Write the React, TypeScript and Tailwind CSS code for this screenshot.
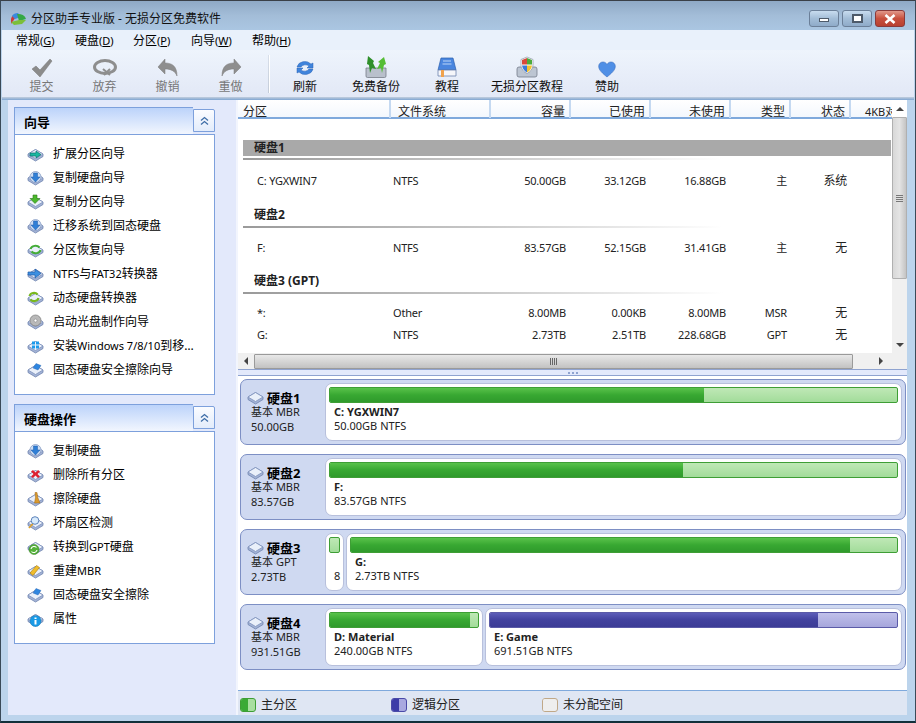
import type { ReactNode } from "react";

const FONT = "font-['Noto_Sans','Noto_Sans_CJK_SC',sans-serif]";

const DiskBase = () => (
  <>
    <path d="M1 8 8.500 3.500 16 8 16 10.500 8.500 15 1 10.500Z" fill="#a3b3d6" stroke="#6f83ad" strokeWidth="0.8" />
    <path d="M1 8 8.500 3.500 16 8 8.500 12.500Z" fill="#eaf0fa" stroke="#7d92bd" strokeWidth="0.8" />
  </>
);

const Overlay = ({ kind }: { kind: string }) => {
  switch (kind) {
    case "extend":
      return <path d="M3 7h6V5l5 3.500-5 3.500v-2H3Z" fill="#18b8a0" stroke="#0d6f70" strokeWidth="0.7" />;
    case "copyDisk":
      return (
        <>
          <circle cx="8.500" cy="7" r="5.500" fill="#cfe0f5" stroke="#7d92bd" strokeWidth="0.7" />
          <path d="M6.500 3h4v4h2.500l-4.500 5-4.500-5h2.500Z" fill="#2f7fd6" stroke="#1f5aa8" strokeWidth="0.5" />
        </>
      );
    case "copyPart":
      return <path d="M6 1h4v3.500h3L8 9.500 3 4.500h3Z" fill="#4cb82e" stroke="#2c7a18" strokeWidth="0.6" />;
    case "recover":
      return (
        <>
          <path d="M3.500 7a5 4 0 0 1 9-1.500" fill="none" stroke="#44ad36" strokeWidth="2" />
          <path d="M13.500 8a5 4 0 0 1-9 1.500" fill="none" stroke="#44ad36" strokeWidth="2" />
        </>
      );
    case "ntfs":
      return <path d="M1 6h7V3l6 4.500-6 4.500V9H1Z" fill="#3c8fe0" stroke="#1f5aa8" strokeWidth="0.7" />;
    case "dynamic":
      return (
        <>
          <path d="M2.500 6a4.500 4 0 0 1 8-1.500" fill="none" stroke="#78b81e" strokeWidth="2.200" />
          <path d="M11.500 8a4.500 4 0 0 1-8 1.500" fill="none" stroke="#78b81e" strokeWidth="2.200" />
        </>
      );
    case "boot":
      return (
        <>
          <circle cx="8.500" cy="6.500" r="5.500" fill="#b9b9b9" stroke="#777" strokeWidth="0.7" />
          <circle cx="8.500" cy="6.500" r="1.500" fill="#fff" stroke="#777" strokeWidth="0.5" />
        </>
      );
    case "windows":
      return <path d="M5 3.500h3v3H5Zm4 0h3v3H9Zm-4 4h3v3H5Zm4 0h3v3H9Z" fill="#1c9bec" />;
    case "wipeSsd":
      return <path d="M9 1.500 14 3.500 11 8 6 6Z" fill="#2f86e0" stroke="#1f5aa8" strokeWidth="0.4" />;
    case "delete":
      return <path d="M6 3 8.500 5.500 11 3 13 4.500 10.500 7 13 9.500 11 11 8.500 8.500 6 11 4 9.500 6.500 7 4 4.500Z" fill="#dd2030" />;
    case "wipe":
      return <path d="M8 1.500h2l.8 5 2.200 5.500H7.500L8.500 6.500Z" fill="#d99a2e" stroke="#9c6514" strokeWidth="0.5" />;
    case "scan":
      return (
        <>
          <path d="M2 13 6 8.500" stroke="#dba02e" strokeWidth="1.800" />
          <circle cx="8" cy="5.500" r="3.800" fill="#d8eafb" stroke="#5c83bb" strokeWidth="1" />
        </>
      );
    case "gpt":
      return (
        <>
          <circle cx="7" cy="10.500" r="5" fill="#55b23a" stroke="#2c7a18" strokeWidth="0.5" />
          <path d="M4 10a3.200 3.200 0 0 1 5.500-1.500M10 11a3.200 3.200 0 0 1-5.500 1.500" fill="none" stroke="#fff" strokeWidth="1.100" />
        </>
      );
    case "mbr":
      return <path d="M3 10 9.500 2.500 12.500 4.500 6 12.500Z" fill="#f0bd2c" stroke="#a8790e" strokeWidth="0.6" />;
    case "info":
      return (
        <>
          <circle cx="8.500" cy="10" r="5.500" fill="#1a9be6" stroke="#0d6fb0" strokeWidth="0.5" />
          <path d="M7.500 9h2v4.500h-2ZM7.500 6.500h2v1.500h-2Z" fill="#fff" />
        </>
      );
    default:
      return null;
  }
};

const DiskIcon = ({ kind = "", size = 17 }: { kind?: string; size?: number }) => (
  <svg width={size} height={size} viewBox="0 0 17 17" className="shrink-0">
    <DiskBase />
    <Overlay kind={kind} />
  </svg>
);

const ToolIcon = ({ name }: { name: string }) => {
  if (name === "check")
    return (
      <svg width="22" height="20" viewBox="0 0 22 20">
        <path d="M1 11 5 8l4 4L19 1l2 2L9 19Z" fill="#8b8b8b" stroke="#777" strokeWidth="0.5" />
      </svg>
    );
  if (name === "discard")
    return (
      <svg width="26" height="20" viewBox="0 0 26 20">
        <ellipse cx="13" cy="9" rx="10.500" ry="6.500" fill="none" stroke="#8e8e8e" strokeWidth="3" />
        <path d="M11 11l7 6M18 11l-6 6" stroke="#8e8e8e" strokeWidth="2" />
      </svg>
    );
  if (name === "undo")
    return (
      <svg width="22" height="20" viewBox="0 0 22 20">
        <path d="M1 9 8 1v4c7 0 12 3 12 13-2-5-6-7-12-7v5Z" fill="#8e8e8e" stroke="#7a7a7a" strokeWidth="0.5" />
      </svg>
    );
  if (name === "redo")
    return (
      <svg width="22" height="20" viewBox="0 0 22 20">
        <path d="M21 9 14 1v4C7 5 2 8 2 18c2-5 6-7 12-7v5Z" fill="#8e8e8e" stroke="#7a7a7a" strokeWidth="0.5" />
      </svg>
    );
  if (name === "refresh")
    return (
      <svg width="20" height="20" viewBox="0 0 20 20">
        <path d="M2 9a8 7 0 0 1 14-3l2-1v5h-6l2-2a5 4 0 0 0-8 1Z" fill="#3f84dc" stroke="#2a62b4" strokeWidth="0.5" />
        <path d="M18 11a8 7 0 0 1-14 3l-2 1v-5h6l-2 2a5 4 0 0 0 8-1Z" fill="#3f84dc" stroke="#2a62b4" strokeWidth="0.5" />
      </svg>
    );
  if (name === "backup")
    return (
      <svg width="22" height="22" viewBox="0 0 22 22">
        <path d="M1 12h20v8a1.500 1.500 0 0 1-1.500 1.500h-17A1.500 1.500 0 0 1 1 20Z" fill="#b9c0cc" stroke="#767c88" strokeWidth="0.8" />
        <path d="M3 0 9 5 8 7l3 6-4-1-2 5-1-8-2-1Z" fill="#2f8f2a" />
        <path d="M19 1 13 6l2 1-3 6 4-1 1 5 2-8 2-1Z" fill="#55bd35" />
      </svg>
    );
  if (name === "book")
    return (
      <svg width="20" height="21" viewBox="0 0 20 21">
        <path d="M4 1h12l3 12H1Z" fill="#4a86df" stroke="#2a5fae" strokeWidth="0.7" />
        <path d="M6 4h8M5.500 7h9" stroke="#bcd6f8" strokeWidth="1.200" />
        <path d="M1 13h18v6H1Z" fill="#f5f6fa" stroke="#6d83ad" strokeWidth="0.8" />
        <path d="M4 13h3v7H4Z" fill="#f0a24d" />
      </svg>
    );
  if (name === "shield")
    return (
      <svg width="22" height="22" viewBox="0 0 22 22">
        <path d="M1 13a2 2 0 0 1 2-2h16a2 2 0 0 1 2 2v6a2 2 0 0 1-2 2H3a2 2 0 0 1-2-2Z" fill="#bcc5d2" stroke="#757c8a" strokeWidth="0.8" />
        <path d="M11 1 17 3.500V9c0 4-3 7-6 8.500C8 16 5 13 5 9V3.500Z" fill="#fff" stroke="#7b8597" strokeWidth="0.6" />
        <path d="M11 2 6 4v4.500h5Z" fill="#d9483a" />
        <path d="M11 2l5 2v4.500h-5Z" fill="#4cab3c" />
        <path d="M6 9.500h5v7c-2-1-4.500-3.500-5-7Z" fill="#3a78d8" />
        <path d="M16 9.500h-5v7c2-1 4.500-3.500 5-7Z" fill="#f1c232" />
      </svg>
    );
  return (
    <svg width="18" height="17" viewBox="0 0 18 17">
      <path d="M9 16C5 12.500.700 9.500.700 5.300.700 2.700 2.700 1 5 1c1.800 0 3.200 1 4 2.500C9.800 2 11.200 1 13 1c2.300 0 4.300 1.700 4.300 4.300C17.300 9.500 13 12.500 9 16Z" fill="#4f8fe6" stroke="#3a6fc0" strokeWidth="0.6" />
    </svg>
  );
};

const ToolButton = ({ icon, label, w, off }: { icon: string; label: string; w: string; off?: boolean }) => (
  <div className={`flex flex-col items-center ${w}`}>
    <div className="h-[24px] flex items-end justify-center">
      <ToolIcon name={icon} />
    </div>
    <span className={`mt-[1px] text-[12px] leading-[16px] whitespace-nowrap ${off ? "text-[#777]" : "text-[#111]"}`}>{label}</span>
  </div>
);

const MenuItem = ({ label, k, w }: { label: string; k: string; w: string }) => (
  <span className={`text-[12px] leading-[21px] text-black whitespace-nowrap ${w}`}>
    {label}
    <span className="text-[11px]">
      (<span className="underline">{k}</span>)
    </span>
  </span>
);

const WinBtn = ({ kind }: { kind: "min" | "max" | "close" }) => (
  <div
    className={`w-[30px] h-[17px] rounded-[3px] border flex items-center justify-center ${
      kind === "close"
        ? "border-[#8a3a3a] bg-gradient-to-b from-[#e0978a] via-[#c8503e] to-[#b84030]"
        : "border-[#6b7f98] bg-gradient-to-b from-[#c8dcef] via-[#a3bdd7] to-[#8fabc9]"
    }`}
  >
    {kind === "min" && <div className="w-[10px] h-[4px] mt-[3px] border border-[#4d5a6a] bg-white" />}
    {kind === "max" && <div className="w-[11px] h-[9px] border-2 border-[#4d5a6a] bg-white" />}
    {kind === "close" && (
      <svg width="12" height="10" viewBox="0 0 12 10">
        <path d="M1.500 1 10.500 9M10.500 1 1.500 9" stroke="#fff" strokeWidth="2.600" />
      </svg>
    )}
  </div>
);

const SidePanel = ({ title, h, children }: { title: string; h: string; children: ReactNode }) => (
  <div className={`w-[201px] ${h} flex flex-col`}>
    <div className="h-[28px] flex items-start border-b border-[#7da0dc]">
      <div className="w-[179px] h-[27px] border-l border-t border-[#7da0dc] bg-gradient-to-b from-[#bcd3fa] to-[#f2f6fe] pl-[9px] text-[13px] leading-[28px] font-bold text-black">
        {title}
      </div>
      <div className="mt-[2px] w-[22px] h-[23px] border border-[#7da0dc] rounded-tr-[2px] bg-gradient-to-b from-[#fbfcff] to-[#e3ecfb] flex items-center justify-center">
        <svg width="11" height="10" viewBox="0 0 11 10">
          <path d="M2 4.500 5.500 1.500 9 4.500M2 8.500 5.500 5.500 9 8.500" fill="none" stroke="#3f6ea8" strokeWidth="1.300" />
        </svg>
      </div>
    </div>
    <div className="flex-1 bg-white border-x border-b border-[#7da0dc] pt-[7px] pl-[12px]">{children}</div>
  </div>
);

// latin runs are smaller than the cjk ones in the original
const MixedLabel = ({ text }: { text: string }) => (
  <span className="ml-[9px] text-[12px] text-black whitespace-nowrap">
    {text.split(/([A-Za-z0-9 /]+)/).map((part, i) =>
      /[A-Za-z0-9]/.test(part) ? (
        <span key={i} className="text-[11px]">
          {part}
        </span>
      ) : (
        part
      ),
    )}
  </span>
);

const SideRow = ({ icon, label }: { icon: string; label: string }) => (
  <div className="h-[24px] flex items-center">
    <DiskIcon kind={icon} />
    <MixedLabel text={label} />
  </div>
);

const wizards = [
  ["extend", "扩展分区向导"],
  ["copyDisk", "复制硬盘向导"],
  ["copyPart", "复制分区向导"],
  ["copyDisk", "迁移系统到固态硬盘"],
  ["recover", "分区恢复向导"],
  ["ntfs", "NTFS与FAT32转换器"],
  ["dynamic", "动态硬盘转换器"],
  ["boot", "启动光盘制作向导"],
  ["windows", "安装Windows 7/8/10到移…"],
  ["wipeSsd", "固态硬盘安全擦除向导"],
];

const diskOps = [
  ["copyDisk", "复制硬盘"],
  ["delete", "删除所有分区"],
  ["wipe", "擦除硬盘"],
  ["scan", "坏扇区检测"],
  ["gpt", "转换到GPT硬盘"],
  ["mbr", "重建MBR"],
  ["wipeSsd", "固态硬盘安全擦除"],
  ["info", "属性"],
];

const COLS = "grid grid-cols-[153px_100px_80px_80px_80px_60px_60px_42px]";

const HeadCell = ({ label, left }: { label: string; left?: boolean }) => (
  <div className={`h-[18px] border-r-2 border-[#c5d9f1] text-[12px] leading-[24px] text-[#222] whitespace-nowrap ${left ? "pl-[5px]" : "text-right pr-[4px]"}`}>
    {label}
  </div>
);

const TableRow = ({ cells, className }: { cells: string[]; className: string }) => (
  <div className={`${COLS} items-center h-[22px] text-[11px] tracking-[-0.2px] text-[#222] ${className}`}>
    <div className="pl-[19px]">{cells[0]}</div>
    <div className="pl-[2px]">{cells[1]}</div>
    <div className="text-right pr-[5px]">{cells[2]}</div>
    <div className="text-right pr-[5px]">{cells[3]}</div>
    <div className="text-right pr-[5px]">{cells[4]}</div>
    <div className="text-right pr-[4px]">{cells[5]}</div>
    <div className="text-right pr-[4px] text-[12px]">{cells[6]}</div>
  </div>
);

const GroupTitle = ({ label, className }: { label: string; className: string }) => (
  <div className={`ml-[5px] w-[480px] ${className}`}>
    <div className="pl-[11px] text-[12px] font-bold leading-[16px] text-[#222]">{label}</div>
    <div className="mt-[3px] h-[2px] bg-gradient-to-r from-[#9a9a9a] via-[#c8c8c8] to-transparent" />
  </div>
);

const Bar = ({ pct, color }: { pct: number; color: "green" | "blue" }) => (
  <div
    className={`mt-[3px] mx-[3px] h-[16px] rounded-[2px] border flex overflow-hidden ${
      color === "green" ? "border-[#3e9e35] bg-gradient-to-b from-[#bfe8b6] to-[#a2dc9a]" : "border-[#5b5ba8] bg-gradient-to-b from-[#c0c0ea] to-[#a6a6dc]"
    }`}
  >
    <div
      className={color === "green" ? "bg-gradient-to-b from-[#58c24a] via-[#38a832] to-[#2f9a2c]" : "bg-gradient-to-b from-[#5d5db8] via-[#42429e] to-[#3c3c96]"}
      style={{ width: `${pct}%` }}
    />
  </div>
);

const Partition = ({ name, size, pct, color = "green", w }: { name: string; size: string; pct: number; color?: "green" | "blue"; w: string }) => (
  <div className={`h-[58px] ${w} shrink-0 bg-white rounded-[7px] border border-[#b8c0dc] overflow-hidden`}>
    <Bar pct={pct} color={color} />
    <div className="pl-[8px] text-[11px] leading-[14px] text-[#222] whitespace-nowrap">
      <div className="mt-[2px] h-[14px] font-bold">{name}</div>
      <div>{size}</div>
    </div>
  </div>
);

const DiskCard = ({ n, type, size, children }: { n: number; type: string; size: string; children: ReactNode }) => (
  <div className="h-[66px] mb-[9px] rounded-[7px] border border-[#7d8fc4] bg-[#cfd9f1] flex items-center">
    <div className="w-[84px] shrink-0 pl-[6px] text-[#222]">
      <div className="flex items-center gap-[3px] h-[15px]">
        <DiskIcon size={17} />
        <span className="text-[13px] leading-[14px] font-bold text-black whitespace-nowrap">硬盘{n}</span>
      </div>
      <div className="pl-[4px] text-[11px] leading-[14px] whitespace-nowrap">基本 {type}</div>
      <div className="pl-[4px] text-[11px] leading-[15px] whitespace-nowrap">{size}</div>
    </div>
    <div className="flex gap-[2px] w-[577px]">{children}</div>
  </div>
);

const Legend = ({ label, w, left, right }: { label: string; w: string; left: string; right: string }) => (
  <div className={`flex items-center ${w}`}>
    <div className={`w-[16px] h-[14px] rounded-[3px] border flex overflow-hidden ${right}`}>
      <div className={`w-[7px] ${left}`} />
    </div>
    <span className="ml-[5px] text-[12px] text-[#222]">{label}</span>
  </div>
);

export default function App() {
  return (
    <div className={`${FONT} w-[916px] h-[723px] overflow-hidden flex flex-col bg-[#bcd4ec] border-t border-x border-b-2 border-t-[#3a4048] border-x-[#3a4a58] border-b-[#12303a]`}>
      <div className="h-[29px] shrink-0 flex items-center bg-gradient-to-b from-[#8fa9c6] via-[#a3bdd8] to-[#aac6e2] pl-[9px] pr-[10px] pt-[6px]">
        <svg width="17" height="14" viewBox="0 0 17 14" className="shrink-0">
          <path d="M1 12 1 7a7 6 0 0 1 7-5Z" fill="#cc3a3a" />
          <path d="M2 4a7 5 0 0 1 6-3l3 4-6 2Z" fill="#3a8adf" />
          <path d="M7 2a8 6 0 0 1 9 5l-7 2Z" fill="#35a845" />
          <path d="M1 10l8-2 7 0-4 4-8 1Z" fill="#7bbf3a" />
        </svg>
        <span className="ml-[4px] text-[12px] text-[#111] whitespace-nowrap">分区助手专业版 - 无损分区免费软件</span>
        <div className="ml-auto flex gap-[3px]">
          <WinBtn kind="min" />
          <WinBtn kind="max" />
          <WinBtn kind="close" />
        </div>
      </div>

      <div className="h-[20px] shrink-0 mx-[1px] pl-[14px] flex bg-[#e9f1fb]">
        <MenuItem label="常规" k="G" w="w-[59px]" />
        <MenuItem label="硬盘" k="D" w="w-[58px]" />
        <MenuItem label="分区" k="P" w="w-[58px]" />
        <MenuItem label="向导" k="W" w="w-[61px]" />
        <MenuItem label="帮助" k="H" w="w-[60px]" />
      </div>

      <div className="h-[47px] shrink-0 mx-[1px] pl-[8px] pt-[4px] flex bg-gradient-to-b from-[#eef4fc] to-[#e2e8f6]">
        <ToolButton icon="check" label="提交" w="w-[63px]" off />
        <ToolButton icon="discard" label="放弃" w="w-[63px]" off />
        <ToolButton icon="undo" label="撤销" w="w-[63px]" off />
        <ToolButton icon="redo" label="重做" w="w-[63px]" off />
        <div className="ml-[6px] mr-[10px] mt-[1px] w-[2px] h-[38px] bg-gradient-to-b from-[#d8dfea] to-[#c4ccd8] border-r border-white" />
        <ToolButton icon="refresh" label="刷新" w="w-[50px]" />
        <ToolButton icon="backup" label="免费备份" w="w-[92px]" />
        <ToolButton icon="book" label="教程" w="w-[50px]" />
        <ToolButton icon="shield" label="无损分区教程" w="w-[110px]" />
        <ToolButton icon="heart" label="赞助" w="w-[50px]" />
      </div>
      <div className="h-[3px] shrink-0 mx-[1px] bg-gradient-to-b from-[#c2cedd] to-[#7fa5d2]" />

      <div className="flex-1 min-h-0 flex ml-[7px] mr-[7px]">
        <div className="w-[228px] shrink-0 bg-[#e3e9fb] pl-[6px] pt-[7px] flex flex-col gap-[9px]">
          <SidePanel title="向导" h="h-[288px]">
            {wizards.map(([icon, label]) => (
              <SideRow key={label} icon={icon} label={label} />
            ))}
          </SidePanel>
          <SidePanel title="硬盘操作" h="h-[240px]">
            {diskOps.map(([icon, label]) => (
              <SideRow key={label} icon={icon} label={label} />
            ))}
          </SidePanel>
        </div>
        <div className="w-[2px] shrink-0 bg-[#f2f5fd]" />

        <div className="w-[669px] shrink-0 flex flex-col bg-white">
          <div className="h-[269px] shrink-0 flex flex-col">
            <div className="flex-1 min-h-0 flex">
              <div className="w-[654px] shrink-0 overflow-hidden">
                <div className={`${COLS} h-[19px] border-b-2 border-[#7fa9dc] bg-gradient-to-b from-[#ffffff] to-[#f3f7fd]`}>
                  <HeadCell label="分区" left />
                  <div className="h-[18px] border-r-2 border-[#c5d9f1] text-[12px] leading-[24px] text-[#222] whitespace-nowrap pl-[7px]">文件系统</div>
                  <HeadCell label="容量" />
                  <HeadCell label="已使用" />
                  <HeadCell label="未使用" />
                  <HeadCell label="类型" />
                  <HeadCell label="状态" />
                  <div className="h-[18px] pl-[14px] text-[11px] leading-[24px] text-[#222] whitespace-nowrap overflow-hidden">4KB对齐</div>
                </div>
                <div className="mt-[21px] ml-[5px] h-[16px] w-[648px] bg-[#a9a9a9] pl-[11px] text-[12px] font-bold leading-[16px] text-[#222]">硬盘1</div>
                <div className="mt-[2px] ml-[5px] h-[2px] w-[480px] bg-gradient-to-r from-[#9a9a9a] via-[#c8c8c8] to-transparent" />
                <TableRow className="mt-[10px]" cells={["C: YGXWIN7", "NTFS", "50.00GB", "33.12GB", "16.88GB", "主", "系统"]} />
                <GroupTitle label="硬盘2" className="mt-[15px]" />
                <TableRow className="mt-[9px]" cells={["F:", "NTFS", "83.57GB", "52.15GB", "31.41GB", "主", "无"]} />
                <GroupTitle label="硬盘3 (GPT)" className="mt-[14px]" />
                <TableRow className="mt-[8px]" cells={["*:", "Other", "8.00MB", "0.00KB", "8.00MB", "MSR", "无"]} />
                <TableRow className="" cells={["G:", "NTFS", "2.73TB", "2.51TB", "228.68GB", "GPT", "无"]} />
              </div>
              <div className="w-[15px] shrink-0 flex flex-col bg-[#f0f0f0]">
                <div className="h-[17px] flex items-center justify-center bg-white">
                  <div className="border-x-[4px] border-b-[4px] border-x-transparent border-b-[#444]" />
                </div>
                <div className="h-[162px] bg-gradient-to-r from-[#d8d8d8] via-[#e4e4e4] to-[#c4c4c4] border border-[#b0b0b0] rounded-[1px] flex flex-col items-center justify-center gap-[1px]">
                  <div className="w-[7px] h-px bg-[#777]" />
                  <div className="w-[7px] h-px bg-[#777]" />
                  <div className="w-[7px] h-px bg-[#777]" />
                  <div className="w-[7px] h-px bg-[#777]" />
                </div>
                <div className="mt-auto h-[17px] flex items-center justify-center">
                  <div className="border-x-[4px] border-t-[4px] border-x-transparent border-t-[#444]" />
                </div>
              </div>
            </div>
            <div className="h-[16px] shrink-0 flex items-center bg-[#f0f0f0]">
              <div className="w-[16px] flex justify-center">
                <div className="border-y-[4px] border-r-[4px] border-y-transparent border-r-[#444]" />
              </div>
              <div className="w-[599px] h-[15px] rounded-[1px] border border-[#9a9a9a] bg-gradient-to-b from-[#e8e8e8] to-[#c2c2c2] flex items-center justify-center gap-[1px]">
                <div className="w-px h-[7px] bg-[#666]" />
                <div className="w-px h-[7px] bg-[#666]" />
                <div className="w-px h-[7px] bg-[#666]" />
                <div className="w-px h-[7px] bg-[#666]" />
              </div>
              <div className="ml-[26px] border-y-[4px] border-l-[4px] border-y-transparent border-l-[#444]" />
            </div>
          </div>

          <div className="h-[7px] shrink-0 bg-[#e3e9fb] border-y border-[#8fa3d0] flex items-center justify-center gap-[2px]">
            <div className="w-[2px] h-[2px] bg-[#8fa3d0]" />
            <div className="w-[2px] h-[2px] bg-[#8fa3d0]" />
            <div className="w-[2px] h-[2px] bg-[#8fa3d0]" />
          </div>

          <div className="flex-1 min-h-0 pl-[2px] pr-[1px] pt-[3px]">
            <DiskCard n={1} type="MBR" size="50.00GB">
              <Partition name="C: YGXWIN7" size="50.00GB NTFS" pct={66} w="w-[577px]" />
            </DiskCard>
            <DiskCard n={2} type="MBR" size="83.57GB">
              <Partition name="F:" size="83.57GB NTFS" pct={62.3} w="w-[577px]" />
            </DiskCard>
            <DiskCard n={3} type="GPT" size="2.73TB">
              <Partition name="" size="8" pct={0} w="w-[19px]" />
              <Partition name="G:" size="2.73TB NTFS" pct={91.4} w="w-[556px]" />
            </DiskCard>
            <DiskCard n={4} type="MBR" size="931.51GB">
              <Partition name="D: Material" size="240.00GB NTFS" pct={94.6} w="w-[158px]" />
              <Partition name="E: Game" size="691.51GB NTFS" pct={80.5} color="blue" w="w-[417px]" />
            </DiskCard>
          </div>

          <div className="h-[25px] shrink-0 border-t border-[#7fa9dc] bg-[#dfe6f3] pl-[2px] pt-[4px] flex items-center">
            <Legend label="主分区" w="w-[151px]" left="bg-[#3aaa35]" right="border-[#3e9e35] bg-[#a8dfa0]" />
            <Legend label="逻辑分区" w="w-[151px]" left="bg-[#3c3ca8]" right="border-[#4a4aa8] bg-[#a8a8e0]" />
            <Legend label="未分配空间" w="w-[151px]" left="bg-[#eeeeee]" right="border-[#c0a888] bg-[#eeeeee]" />
          </div>
        </div>
      </div>
      <div className="h-[6px] shrink-0 bg-[#bcd4ec]" />
    </div>
  );
}
